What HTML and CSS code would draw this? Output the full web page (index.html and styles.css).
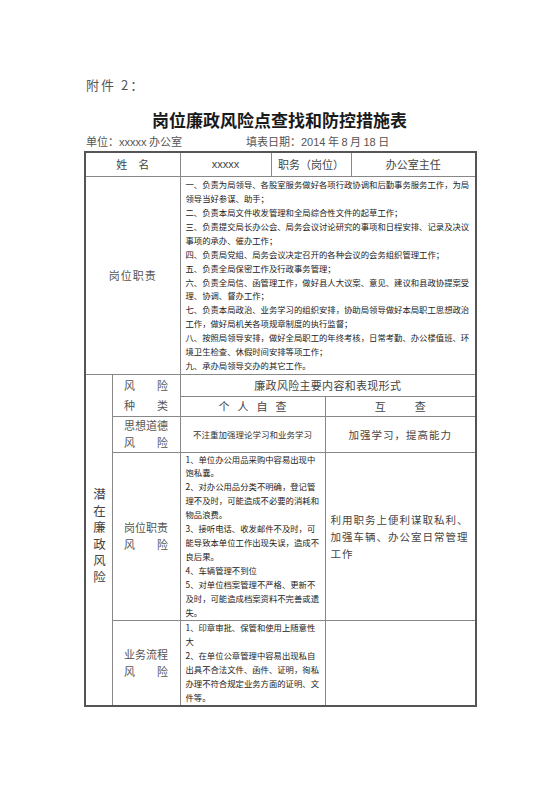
FILE: index.html
```html
<!DOCTYPE html>
<html lang="zh-CN">
<head>
<meta charset="utf-8">
<title>岗位廉政风险点查找和防控措施表</title>
<link rel="stylesheet" href="styles.css">
</head>
<body>
<div class="page">
  <div class="note">附件 2：</div>
  <h1 class="title">岗位廉政风险点查找和防控措施表</h1>
  <div class="info"><span class="unit">单位：<span class="latin">xxxxx</span> 办公室</span><span class="date">填表日期：<span class="latin">2014</span> 年 <span class="latin">8</span> 月 <span class="latin">18</span> 日</span></div>
  <table class="sheet">
    <colgroup>
      <col class="c1"><col class="c2"><col class="c3"><col class="c4"><col class="c5"><col class="c6">
    </colgroup>
    <tr class="r-head">
      <td colspan="2" class="hd">姓&emsp;名</td>
      <td class="hd latin xs">xxxxx</td>
      <td colspan="2" class="hd">职务（岗位）</td>
      <td class="hd">办公室主任</td>
    </tr>
    <tr class="r-duty">
      <td colspan="2" class="lbl">岗位职责</td>
      <td colspan="4" class="txt duty">一、负责为局领导、各股室服务做好各项行政协调和后勤事务服务工作，为局<br>领导当好参谋、助手；<br>二、负责本局文件收发管理和全局综合性文件的起草工作；<br>三、负责提交局长办公会、局务会议讨论研究的事项和日程安排、记录及决议<br>事项的承办、催办工作；<br>四、负责局党组、局务会议决定召开的各种会议的会务组织管理工作；<br>五、负责全局保密工作及行政事务管理；<br>六、负责全局信、函管理工作，做好县人大议案、意见、建议和县政协提案受<br>理、协调、督办工作；<br>七、负责本局政治、业务学习的组织安排，协助局领导做好本局职工思想政治<br>工作，做好局机关各项规章制度的执行监督；<br>八、按照局领导安排，做好全局职工的年终考核，日常考勤、办公楼值班、环<br>境卫生检查、休假时间安排等项工作；<br>九、承办局领导交办的其它工作。</td>
    </tr>
    <tr class="r-k1">
      <td rowspan="5" class="vert"><span class="vtext">潜在廉政风险</span></td>
      <td rowspan="2" class="lbl2 kind">
        <div class="jl"><span>风</span><span>险</span></div>
        <div class="jl"><span>种</span><span>类</span></div>
      </td>
      <td colspan="4" class="hd main">廉政风险主要内容和表现形式</td>
    </tr>
    <tr class="r-k2">
      <td colspan="2" class="hd"><div class="spread self"><span>个</span><span>人</span><span>自</span><span>查</span></div></td>
      <td colspan="2" class="hd"><div class="spread mutual"><span>互</span><span>查</span></div></td>
    </tr>
    <tr class="r-ideo">
      <td class="lbl2">
        <div class="jl"><span>思</span><span>想</span><span>道</span><span>德</span></div>
        <div class="jl"><span>风</span><span>险</span></div>
      </td>
      <td colspan="2" class="small">不注重加强理论学习和业务学习</td>
      <td colspan="2" class="big">加强学习，提高能力</td>
    </tr>
    <tr class="r-post">
      <td class="lbl2">
        <div class="jl"><span>岗</span><span>位</span><span>职</span><span>责</span></div>
        <div class="jl"><span>风</span><span>险</span></div>
      </td>
      <td colspan="2" class="txt list">1、单位办公用品采购中容易出现中<br>饱私囊。<br>2、对办公用品分类不明确，登记管<br>理不及时，可能造成不必要的消耗和<br>物品浪费。<br>3、接听电话、收发邮件不及时，可<br>能导致本单位工作出现失误，造成不<br>良后果。<br>4、车辆管理不到位<br>5、对单位档案管理不严格、更新不<br>及时，可能造成档案资料不完善或遗<br>失。</td>
      <td colspan="2" class="big left">利用职务上便利谋取私利、<br>加强车辆、办公室日常管理<br>工作</td>
    </tr>
    <tr class="r-biz">
      <td class="lbl2">
        <div class="jl"><span>业</span><span>务</span><span>流</span><span>程</span></div>
        <div class="jl"><span>风</span><span>险</span></div>
      </td>
      <td colspan="2" class="txt list">1、印章审批、保管和使用上随意性<br>大<br>2、在单位公章管理中容易出现私自<br>出具不合法文件、函件、证明，徇私<br>办理不符合规定业务方面的证明、文<br>件等。</td>
      <td colspan="2" class="empty"></td>
    </tr>
  </table>
</div>
</body>
</html>
```

FILE: styles.css
```css
* { box-sizing: border-box; }
html, body { margin: 0; padding: 0; background: #fff; }
body {
  font-family: "Noto Sans CJK SC", "Noto Sans", sans-serif;
  color: #333;
}
.page {
  width: 391px;
  margin-left: 84px;
  padding-top: 75px;
}
.note {
  font-size: 13px;
  line-height: 20px;
  letter-spacing: 2px;
  padding-left: 2px;
  color: #555;
}
.title {
  margin: 13px 0 0;
  font-size: 17px;
  line-height: 24px;
  font-weight: 700;
  text-align: center;
  color: #1a1a1a;
}
.info {
  display: flex;
  margin-top: 2px;
  padding-left: 2px;
  font-size: 11px;
  line-height: 14px;
  color: #555;
}
.unit { width: 160px; }
.latin { font-family: "Liberation Sans", "Noto Sans CJK SC", sans-serif; }
.xs { font-size: 11px; }

.sheet {
  width: 391px;
  margin-top: 2px;
  border-collapse: collapse;
  table-layout: fixed;
  border: 2px solid #555;
}
.c1 { width: 27px; }
.c2 { width: 68px; }
.c3 { width: 91px; }
.c4 { width: 54px; }
.c5 { width: 26px; }
.c6 { width: 125px; }
.sheet td {
  border: 1px solid #888;
  padding: 0;
  vertical-align: middle;
  text-align: center;
}
.r-head { height: 24px; }
.r-duty { height: 198px; }
.r-k1 { height: 22px; }
.r-k2 { height: 20px; }
.r-ideo { height: 36px; }
.r-post { height: 168px; }
.r-biz { height: 86px; }

.hd {
  font-size: 11px;
  line-height: 14px;
  color: #444;
}
.main { letter-spacing: 0.3px; }
.lbl {
  font-size: 11px;
  letter-spacing: 1px;
  color: #555;
}
.lbl2 {
  font-size: 11px;
  line-height: 17px;
  color: #555;
}
.kind { line-height: 20px; }
.jl {
  display: flex;
  justify-content: space-between;
  width: 44px;
  margin: 0 auto;
}
.spread {
  display: flex;
  justify-content: center;
}
.self { gap: 8px; }
.mutual { gap: 29px; }

.sheet td.txt {
  text-align: left;
  padding-left: 5px;
  font-size: 8.35px;
  line-height: 13.9px;
  white-space: nowrap;
  color: #222;
}
.sheet td.duty { padding: 1px 0 0 5px; }
.small {
  font-size: 8.5px;
  color: #333;
}
.big {
  font-size: 10.5px;
  line-height: 17px;
  letter-spacing: 1px;
  color: #444;
}
.sheet td.left { text-align: left; padding-left: 5px; }
.vert { color: #444; }
.vtext {
  display: inline-block;
  writing-mode: vertical-rl;
  font-size: 12.5px;
  letter-spacing: 4px;
  line-height: 1;
}
```
